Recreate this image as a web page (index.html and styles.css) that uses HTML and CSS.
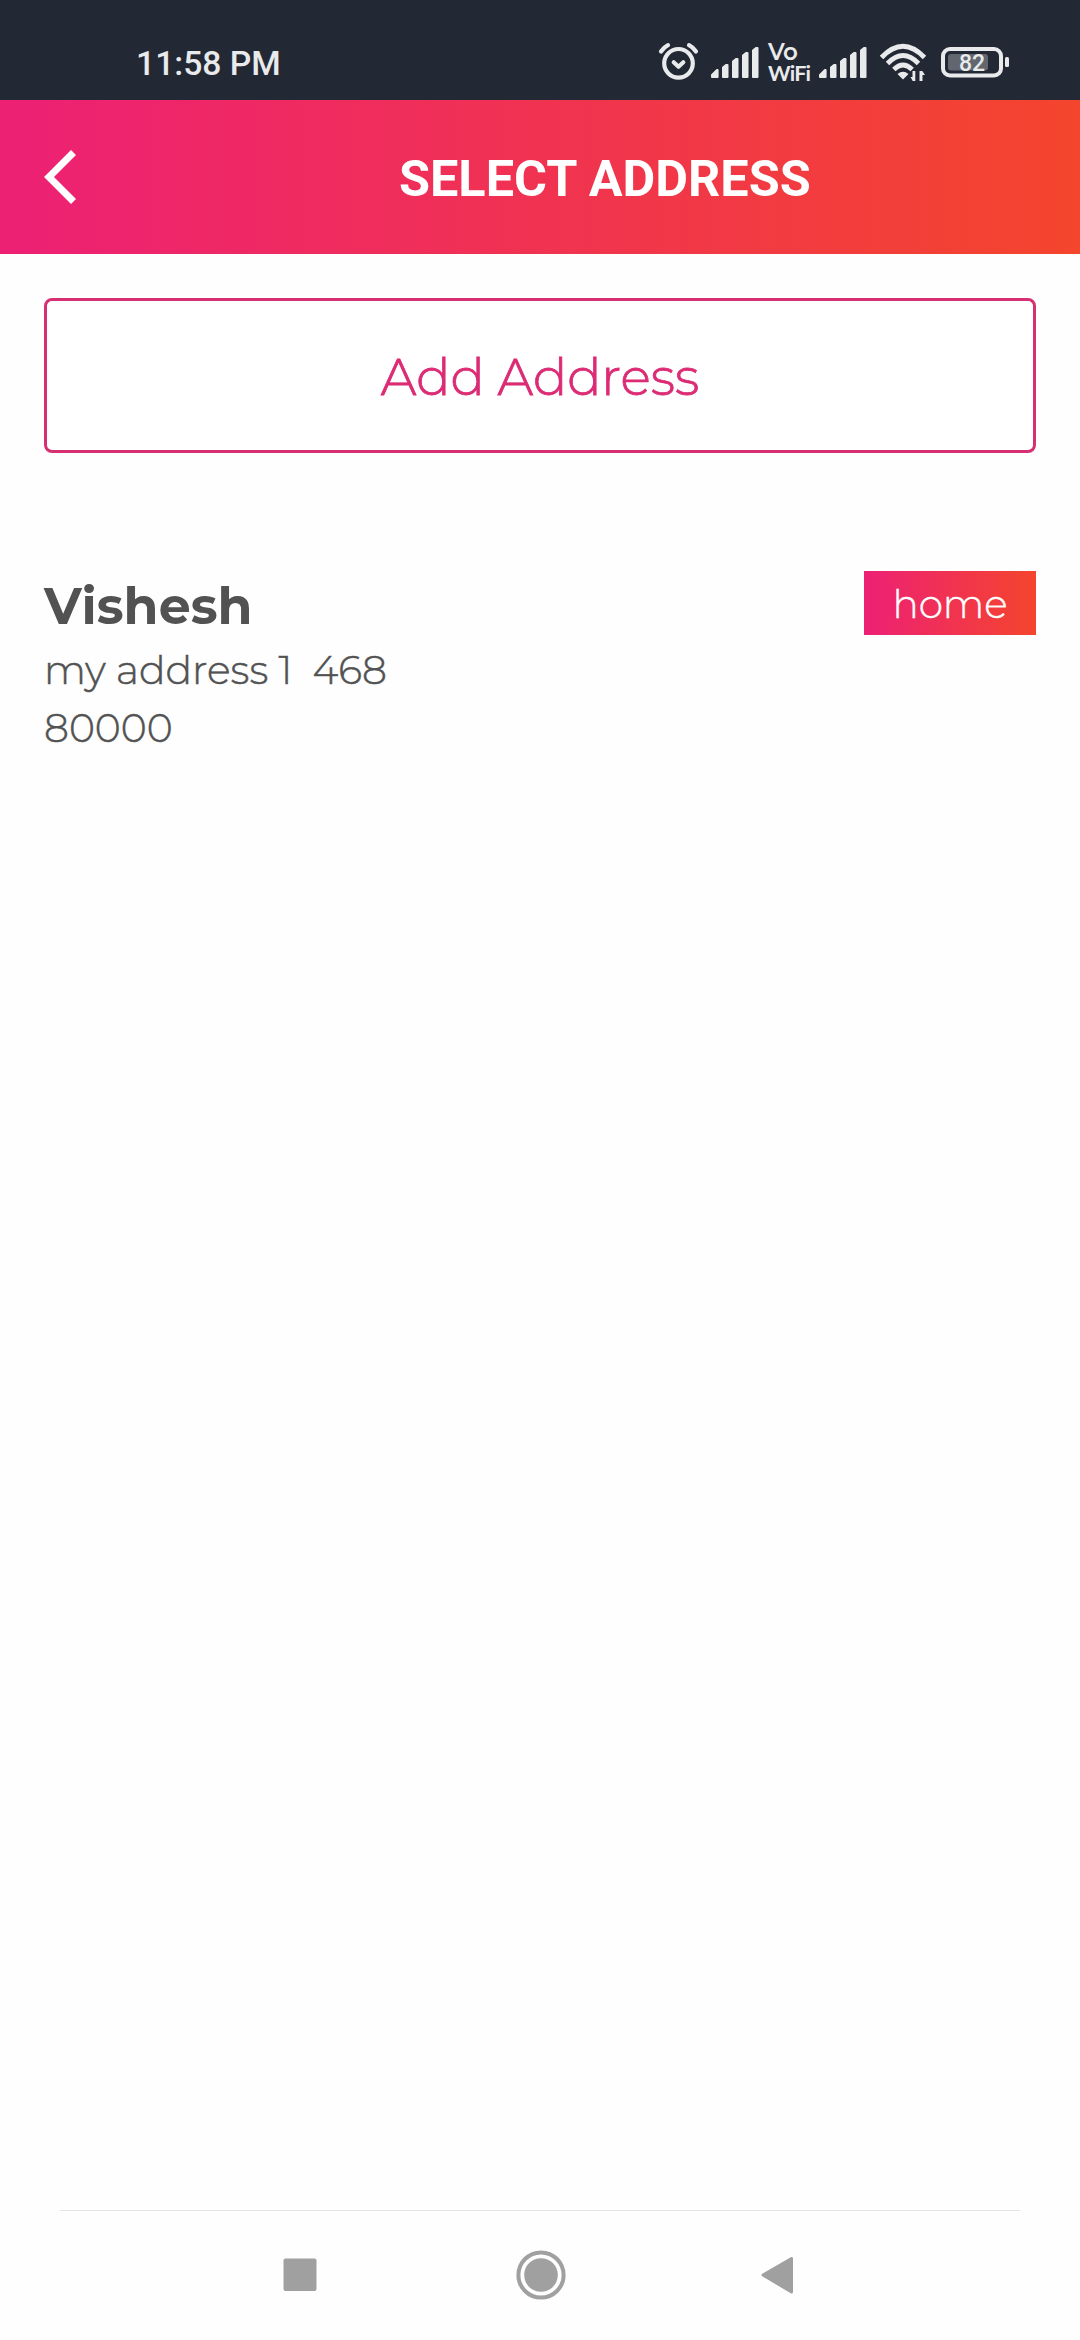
FILE: index.html
```html
<!DOCTYPE html>
<html lang="en">
<head>
<meta charset="utf-8">
<title>Select Address</title>
<link rel="stylesheet" href="styles.css">
</head>
<body>
<div class="screen">
  <div class="status">
    <span class="time">11:58 PM</span>
    <div class="indicators">
      <svg class="alarm" width="42" height="40" viewBox="0 0 42 40" fill="none" stroke="#e9eaeb" stroke-width="4.2" stroke-linecap="round" stroke-linejoin="round"><circle cx="20.5" cy="21.3" r="14.3"/><path d="M3 9.5Q5.700 5.400 10 3.200M31 3.200Q35.300 5.400 38 9.500M15.700 20.300l4.800 4.400 4.800-4.400"/></svg>
      <svg class="signal" width="48" height="40" viewBox="0 0 48 40" fill="#e9eaeb" stroke="#e9eaeb" stroke-width="2" stroke-linejoin="round"><path d="M1 34.5v-1.500l5-5h.6v7H1zM12 25.500l3-2.500h1.500v12H12zM22 19.500l3-2.500h1.500v18H22zM32 13.500l3-2.500h1.500v24H32zM42 8.500l3-2.500h1.500v29H42z"/></svg>
      <div class="vowifi"><span class="vo">Vo</span><span class="wf">WiFi</span></div>
      <svg class="signal" width="48" height="40" viewBox="0 0 48 40" fill="#e9eaeb" stroke="#e9eaeb" stroke-width="2" stroke-linejoin="round"><path d="M1 34.5v-1.500l5-5h.6v7H1zM12 25.500l3-2.500h1.500v12H12zM22 19.500l3-2.500h1.500v18H22zM32 13.500l3-2.500h1.500v24H32zM42 8.500l3-2.500h1.500v29H42z"/></svg>
      <svg class="wifi" width="48" height="40" viewBox="0 0 48 40"><g fill="none" stroke="#e9eaeb" stroke-width="4.800"><path d="M1.500 15.500Q23 -7 44.500 15.500M7.500 21.500Q23 5.500 38.500 21.500M13.800 27.500Q23 18.500 32.200 27.500"/></g><path d="M17.500 32Q23 27.500 28.500 32L23 37.500zM35.300 29v10h-2.600L30.500 35h2v-6zM39.500 39V29h2.800l2.700 4h-2.500v6z" fill="#e9eaeb"/></svg>
      <svg class="battery" width="69" height="40" viewBox="0 0 69 40"><rect x="8" y="12" width="40" height="16.500" rx="3" fill="#62666f"/><rect x="3" y="7" width="58" height="26.500" rx="7" fill="none" stroke="#e9eaeb" stroke-width="4"/><rect x="65" y="15" width="4" height="10" rx="1.500" fill="#e9eaeb"/><text class="level" x="19" y="29">82</text></svg>
    </div>
  </div>
  <header class="header">
    <svg class="back" width="34" height="56" viewBox="0 0 34 56"><path d="M29.500 3.500L5 28l24.500 24.500" fill="none" stroke="#fff" stroke-width="7"/></svg>
    <h1 class="title">SELECT ADDRESS</h1>
  </header>
  <main class="content">
    <button class="add">Add Address</button>
    <section class="address">
      <div class="details">
        <h2 class="name">Vishesh</h2>
        <p class="line">my address 1&nbsp; 468</p>
        <p class="line">80000</p>
      </div>
      <span class="tag">home</span>
    </section>
  </main>
  <nav class="nav">
    <svg width="34" height="50" viewBox="0 0 34 50"><rect x=".5" y="8.500" width="33" height="32.500" rx="2" fill="#a0a0a0"/></svg>
    <svg class="home" width="50" height="50" viewBox="0 0 50 50"><circle cx="25" cy="25" r="22.600" fill="none" stroke="#a0a0a0" stroke-width="4"/><circle cx="25" cy="25" r="16.800" fill="#a0a0a0"/></svg>
    <svg width="34" height="50" viewBox="0 0 34 50"><path d="M3 25L31.500 8.500v33.500z" fill="#a0a0a0" stroke="#a0a0a0" stroke-width="3" stroke-linejoin="round"/></svg>
  </nav>
</div>
</body>
</html>
```
FILE: styles.css
```css
* { box-sizing: border-box; margin: 0; padding: 0; }
body { background: #fff; font-family: Montserrat, Inter, sans-serif; color: #525252; }
svg { display: block; flex: none; }
.screen { width: 1080px; height: 2340px; display: flex; flex-direction: column; background: #fefefe; }
.status { height: 100px; background: #222834; display: flex; justify-content: space-between; padding: 42px 71px 0 136px; font-family: Roboto, sans-serif; color: #e9eaeb; }
.time { font-size: 33.7px; line-height: 40px; font-weight: 500; padding-top: 2px; white-space: nowrap; }
.indicators { display: flex; height: 40px; }
.signal { margin-left: 11px; }
.vowifi { width: 43px; margin-left: 9px; display: flex; flex-direction: column; white-space: nowrap; }
.vo { font: 600 23px/20px Montserrat, Inter, sans-serif; letter-spacing: -0.5px; }
.wf { font: 700 21.5px/22px Lato, sans-serif; letter-spacing: -0.8px; }
.vowifi + .signal { margin-left: 8px; }
.wifi { margin-left: 13px; }
.battery { margin-left: 12px; }
.level { font: 500 23px Roboto, sans-serif; fill: #e9eaeb; }
.header { height: 154px; display: flex; align-items: center; background: linear-gradient(90deg, #ed2075, #f4452d); padding-left: 44px; }
.title { margin-left: 321px; font: 700 50.4px/60px Roboto, sans-serif; color: #fff; white-space: nowrap; padding-top: 3px; }
.content { flex: 1; padding: 44px; }
.add { display: block; width: 992px; height: 155px; border: 3px solid #d63073; border-radius: 8px; background: #fff; color: #dc2b74; font: 300 50.6px/60px Montserrat, Inter, sans-serif; padding-top: 3px; -webkit-text-stroke: 0.8px #dc2b74; }
.address { display: flex; justify-content: space-between; align-items: flex-start; padding-top: 118px; }
.details { padding-top: 3px; }
.name { font-size: 50.6px; line-height: 64px; font-weight: 700; padding-bottom: 3px; }
.line { font-size: 39.4px; line-height: 58px; font-weight: 300; -webkit-text-stroke: 0.5px #525252; }
.tag { width: 172px; height: 64px; background: linear-gradient(90deg, #ed2075, #f4452d); color: #fff; font-size: 39px; line-height: 66px; font-weight: 300; text-align: center; -webkit-text-stroke: 0.4px #fff; }
.nav { height: 130px; margin: 0 60px; border-top: 1px solid #e5e5e5; display: flex; justify-content: space-between; padding: 39px 226px 0 223px; }
.home { margin-left: 4px; }
```
